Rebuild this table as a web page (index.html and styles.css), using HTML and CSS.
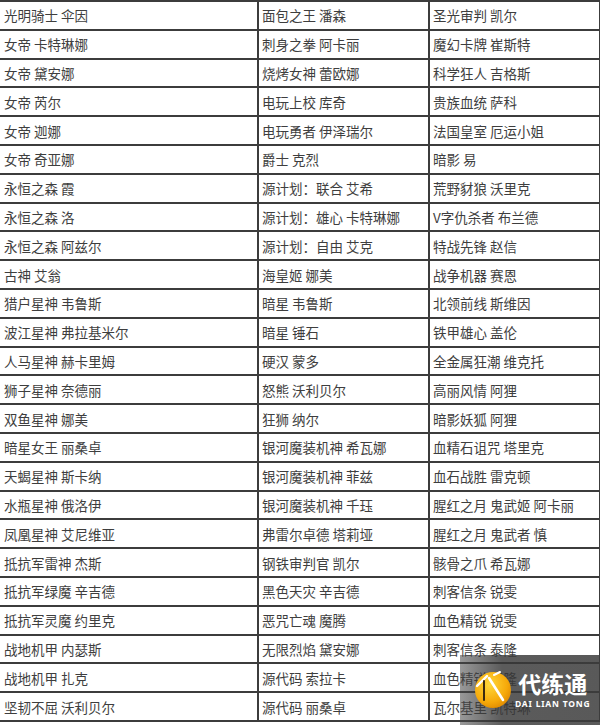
FILE: index.html
```html
<!DOCTYPE html>
<html lang="zh-CN">
<head>
<meta charset="utf-8">
<title>皮肤列表</title>
<link rel="stylesheet" href="styles.css">
</head>
<body>
<div class="page">
<table class="skins">
<colgroup><col class="c1"><col class="c2"><col class="c3"></colgroup>
<tbody>
<tr><td>光明骑士 伞因</td><td>面包之王 潘森</td><td>圣光审判 凯尔</td></tr>
<tr><td>女帝 卡特琳娜</td><td>刺身之拳 阿卡丽</td><td>魔幻卡牌 崔斯特</td></tr>
<tr><td>女帝 黛安娜</td><td>烧烤女神 蕾欧娜</td><td>科学狂人 吉格斯</td></tr>
<tr><td>女帝 芮尔</td><td>电玩上校 库奇</td><td>贵族血统 萨科</td></tr>
<tr><td>女帝 迦娜</td><td>电玩勇者 伊泽瑞尔</td><td>法国皇室 厄运小姐</td></tr>
<tr><td>女帝 奇亚娜</td><td>爵士 克烈</td><td>暗影 易</td></tr>
<tr><td>永恒之森 霞</td><td>源计划：联合 艾希</td><td>荒野豺狼 沃里克</td></tr>
<tr><td>永恒之森 洛</td><td>源计划：雄心 卡特琳娜</td><td>V字仇杀者 布兰德</td></tr>
<tr><td>永恒之森 阿兹尔</td><td>源计划：自由 艾克</td><td>特战先锋 赵信</td></tr>
<tr><td>古神 艾翁</td><td>海皇姬 娜美</td><td>战争机器 赛恩</td></tr>
<tr><td>猎户星神 韦鲁斯</td><td>暗星 韦鲁斯</td><td>北领前线 斯维因</td></tr>
<tr><td>波江星神 弗拉基米尔</td><td>暗星 锤石</td><td>铁甲雄心 盖伦</td></tr>
<tr><td>人马星神 赫卡里姆</td><td>硬汉 蒙多</td><td>全金属狂潮 维克托</td></tr>
<tr><td>狮子星神 奈德丽</td><td>怒熊 沃利贝尔</td><td>高丽风情 阿狸</td></tr>
<tr><td>双鱼星神 娜美</td><td>狂狮 纳尔</td><td>暗影妖狐 阿狸</td></tr>
<tr><td>暗星女王 丽桑卓</td><td>银河魔装机神 希瓦娜</td><td>血精石诅咒 塔里克</td></tr>
<tr><td>天蝎星神 斯卡纳</td><td>银河魔装机神 菲兹</td><td>血石战胜 雷克顿</td></tr>
<tr><td>水瓶星神 俄洛伊</td><td>银河魔装机神 千珏</td><td>腥红之月 鬼武姬 阿卡丽</td></tr>
<tr><td>凤凰星神 艾尼维亚</td><td>弗雷尔卓德 塔莉垭</td><td>腥红之月 鬼武者 慎</td></tr>
<tr><td>抵抗军雷神 杰斯</td><td>钢铁审判官 凯尔</td><td>骸骨之爪 希瓦娜</td></tr>
<tr><td>抵抗军绿魔 辛吉德</td><td>黑色天灾 辛吉德</td><td>刺客信条 锐雯</td></tr>
<tr><td>抵抗军灵魔 约里克</td><td>恶咒亡魂 魔腾</td><td>血色精锐 锐雯</td></tr>
<tr><td>战地机甲 内瑟斯</td><td>无限烈焰 黛安娜</td><td>刺客信条 泰隆</td></tr>
<tr><td>战地机甲 扎克</td><td>源代码 索拉卡</td><td>血色精锐 泰隆</td></tr>
<tr><td>坚韧不屈 沃利贝尔</td><td>源代码 丽桑卓</td><td>瓦尔基里 凯特琳</td></tr>
</tbody>
</table>

<div class="watermark">
  <svg class="logo" viewBox="0 0 40 40" width="40" height="40">
    <defs>
      <radialGradient id="g" cx="40%" cy="35%" r="70%">
        <stop offset="0" stop-color="#ffd83a"/>
        <stop offset="0.7" stop-color="#f6a90a"/>
        <stop offset="1" stop-color="#e08a00"/>
      </radialGradient>
    </defs>
    <circle cx="21" cy="21" r="18" fill="url(#g)"/>
    <path d="M5 17 L15 7" stroke="#fff" stroke-width="2.4" fill="none" stroke-linecap="round"/>
    <path d="M12 12 L12 31" stroke="#3a2a10" stroke-width="2" fill="none" stroke-linecap="round"/>
    <path d="M17 9 L31 31" stroke="#fff" stroke-width="2.6" fill="none" stroke-linecap="round"/>
    <path d="M22 6 L28 3" stroke="#fff" stroke-width="2" fill="none" stroke-linecap="round"/>
  </svg>
  <div class="brand">
    <div class="brand-cn">代练通</div>
    <div class="brand-en">DAI LIAN TONG</div>
  </div>
</div>
</div>
</body>
</html>
```

FILE: styles.css
```css
html, body {
  margin: 0;
  padding: 0;
  background: #ffffff;
}

.page {
  position: relative;
  width: 600px;
  height: 725px;
  overflow: hidden;
}

.skins {
  border-collapse: collapse;
  table-layout: fixed;
  width: 600px;
  margin-left: -1px;
  margin-top: 0;
  font-family: "Noto Sans CJK SC", "Noto Sans", sans-serif;
  font-size: 13.5px;
  color: #3e3e3e;
}

.c1 { width: 258px; }
.c2 { width: 171px; }
.c3 { width: 171px; }

.skins td {
  border: 2px solid #3c3c3c;
  height: 26.8px;
  padding: 0 0 0 3px;
  line-height: 18px;
  white-space: nowrap;
  overflow: hidden;
  vertical-align: middle;
}

.skins td:first-child {
  border-left-color: transparent;
}

.watermark {
  position: absolute;
  left: 460px;
  top: 655px;
  width: 140px;
  height: 70px;
  background: linear-gradient(to right, rgba(70, 70, 70, 0.55), rgba(55, 55, 55, 0.82) 30%, rgba(60, 60, 60, 0.85));
  display: flex;
  align-items: flex-start;
  gap: 3px;
  padding: 13px 0 0 12px;
  box-sizing: border-box;
}

.logo {
  flex: none;
  margin-top: 1px;
}

.brand {
  display: flex;
  flex-direction: column;
  align-items: center;
  color: #ffffff;
}

.brand-cn {
  font-family: "Noto Sans CJK SC", sans-serif;
  font-weight: 700;
  font-size: 23px;
  line-height: 30px;
}

.brand-en {
  font-family: "Noto Sans", "DejaVu Sans", sans-serif;
  font-weight: 700;
  font-size: 8.5px;
  line-height: 11px;
  letter-spacing: 0.8px;
}
```
